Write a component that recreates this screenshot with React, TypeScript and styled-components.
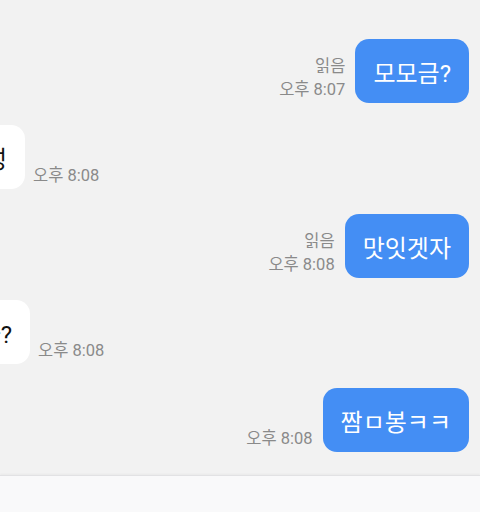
import React from 'react';
import styled, { createGlobalStyle } from 'styled-components';

type Message = {
  id: number;
  mine: boolean;
  text: string;
  time: string;
  read?: boolean;
  edge?: number;
  space: number;
};

const messages: Message[] = [
  { id: 1, mine: true, text: '모모금?', time: '오후 8:07', read: true, space: 0 },
  { id: 2, mine: false, text: '배고파서 그래성', time: '오후 8:08', edge: 25, space: 22 },
  { id: 3, mine: true, text: '맛잇겟자', time: '오후 8:08', read: true, space: 25 },
  { id: 4, mine: false, text: '뭐 먹을까?', time: '오후 8:08', edge: 30, space: 22 },
  { id: 5, mine: true, text: '짬ㅁ봉ㅋㅋ', time: '오후 8:08', space: 24 },
];

const App = () => {
  const renderMessage = (m: Message) => {
    if (m.mine) {
      return (
        <SentRow key={m.id} $space={m.space}>
          <Meta $align="right">
            {m.read && <span>읽음</span>}
            <span>{m.time}</span>
          </Meta>
          <Bubble $mine>{m.text}</Bubble>
        </SentRow>
      );
    }
    return (
      <ReceivedRow key={m.id} $space={m.space}>
        <BubbleSlot $edge={m.edge ?? 25}>
          <Bubble>{m.text}</Bubble>
        </BubbleSlot>
        <Meta $align="left">
          <span>{m.time}</span>
        </Meta>
      </ReceivedRow>
    );
  };

  return (
    <>
      <GlobalStyle />
      <Screen>
        <MessageList>{messages.map(renderMessage)}</MessageList>
        <InputBar />
      </Screen>
    </>
  );
};

const GlobalStyle = createGlobalStyle`
  html, body {
    margin: 0;
    padding: 0;
    background: #f2f2f2;
  }
  body {
    font-family: Roboto, "Noto Sans CJK KR", sans-serif;
  }
`;

const Screen = styled.div`
  width: 480px;
  height: 512px;
  display: flex;
  flex-direction: column;
  background: #f2f2f2;
  overflow: hidden;
`;

const MessageList = styled.div`
  flex: 1;
  display: flex;
  flex-direction: column;
  padding: 39px 11px 0 0;
`;

const SentRow = styled.div<{ $space: number }>`
  display: flex;
  justify-content: flex-end;
  align-items: flex-end;
  gap: 10px;
  margin-top: ${(p) => p.$space}px;
`;

const ReceivedRow = styled.div<{ $space: number }>`
  display: flex;
  align-items: flex-end;
  gap: 8px;
  margin-top: ${(p) => p.$space}px;
`;

const BubbleSlot = styled.div<{ $edge: number }>`
  width: ${(p) => p.$edge}px;
  flex-shrink: 0;
  display: flex;
  justify-content: flex-end;
`;

const Bubble = styled.div<{ $mine?: boolean }>`
  flex-shrink: 0;
  white-space: nowrap;
  height: 64px;
  box-sizing: border-box;
  padding: 0 18px;
  display: flex;
  align-items: center;
  border-radius: 14px;
  font-family: Roboto, "Noto Sans CJK KR", sans-serif;
  font-size: 24px;
  background: ${(p) => (p.$mine ? '#448ef4' : '#ffffff')};
  color: ${(p) => (p.$mine ? '#ffffff' : '#111111')};
`;

const Meta = styled.div<{ $align: 'left' | 'right' }>`
  display: flex;
  flex-direction: column;
  align-items: ${(p) => (p.$align === 'right' ? 'flex-end' : 'flex-start')};
  padding-bottom: 2px;
  font-family: Roboto, "Noto Sans CJK KR", sans-serif;
  font-size: 16.5px;
  line-height: 23px;
  color: #8a8a8a;
`;

const InputBar = styled.div`
  height: 36px;
  flex-shrink: 0;
  background: #f9f9fa;
  border-top: 1px solid #e2e2e4;
  box-shadow: 0 -1px 2px rgba(0, 0, 0, 0.04);
`;

export default App;
